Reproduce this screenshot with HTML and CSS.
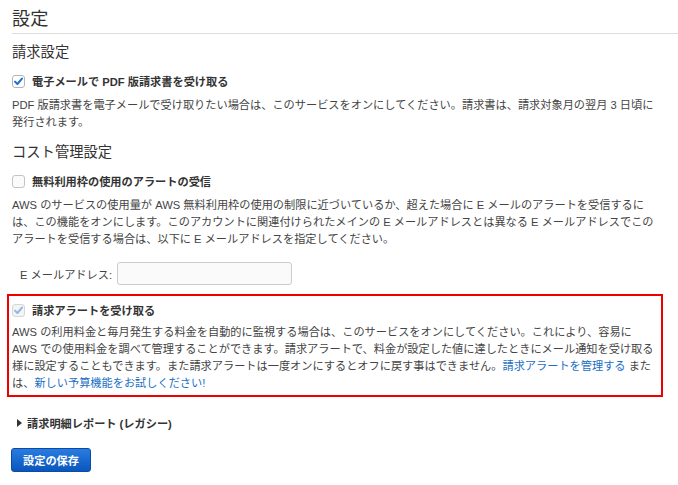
FILE: index.html
```html
<!DOCTYPE html>
<html lang="ja">
<head>
<meta charset="utf-8">
<link rel="stylesheet" href="styles.css">
</head>
<body>
<div class="page">
  <h1 class="title">設定</h1>

  <h2 class="section">請求設定</h2>
  <label class="check-row">
    <svg class="cb" width="13" height="13" viewBox="0 0 13 13"><rect x="0.5" y="0.5" width="12" height="12" rx="2.5" fill="#fff" stroke="#b5b5b5"/><path d="M3 6.6 L5.4 9 L10 3.6" fill="none" stroke="#1d6fd6" stroke-width="2" stroke-linecap="round" stroke-linejoin="round"/></svg>
    <span class="check-label">電子メールで PDF 版請求書を受け取る</span>
  </label>
  <p class="desc">PDF 版請求書を電子メールで受け取りたい場合は、このサービスをオンにしてください。請求書は、請求対象月の翌月 3 日頃に<br>発行されます。</p>

  <h2 class="section section-2">コスト管理設定</h2>
  <label class="check-row">
    <svg class="cb" width="13" height="13" viewBox="0 0 13 13"><rect x="0.5" y="0.5" width="12" height="12" rx="2.5" fill="#fafafa" stroke="#c4c4c4"/></svg>
    <span class="check-label">無料利用枠の使用のアラートの受信</span>
  </label>
  <p class="desc">AWS のサービスの使用量が AWS 無料利用枠の使用の制限に近づいているか、超えた場合に E メールのアラートを受信するに<br>は、この機能をオンにします。このアカウントに関連付けられたメインの E メールアドレスとは異なる E メールアドレスでこの<br>アラートを受信する場合は、以下に E メールアドレスを指定してください。</p>

  <div class="email-row">
    <span class="email-label">E メールアドレス:</span>
    <span class="email-input"></span>
  </div>

  <div class="alert-box">
    <label class="check-row">
      <svg class="cb" width="13" height="13" viewBox="0 0 13 13"><rect x="0.5" y="0.5" width="12" height="12" rx="2.5" fill="#f4f4f4" stroke="#d6d6d6"/><path d="M3 6.6 L5.4 9 L10 3.6" fill="none" stroke="#8fb8e6" stroke-width="2" stroke-linecap="round" stroke-linejoin="round"/></svg>
      <span class="check-label">請求アラートを受け取る</span>
    </label>
    <p class="desc desc-alert">AWS の利用料金と毎月発生する料金を自動的に監視する場合は、このサービスをオンにしてください。これにより、容易に<br>AWS での使用料金を調べて管理することができます。請求アラートで、料金が設定した値に達したときにメール通知を受け取る<br>様に設定することもできます。また請求アラートは一度オンにするとオフに戻す事はできません。<a class="link" href="#">請求アラートを管理する</a> また<br>は、<a class="link" href="#">新しい予算機能をお試しください!</a></p>
  </div>

  <div class="legacy">
    <span class="tri"></span>
    <span class="legacy-label">請求明細レポート (レガシー)</span>
  </div>

  <button class="save-btn" type="button">設定の保存</button>
</div>
</body>
</html>
```

FILE: styles.css
```css
html, body {
  margin: 0;
  padding: 0;
  background: #fff;
}

body {
  font-family: "Liberation Sans", "Noto Sans CJK JP", sans-serif;
  color: #444;
  font-size: 11.2px;
}

.page {
  padding-left: 12px;
  width: 666px;
}

.title {
  margin: 0;
  padding: 7px 0 2px;
  font-size: 18.2px;
  line-height: 24px;
  font-weight: normal;
  color: #333;
  border-bottom: 1px solid #ddd;
}

.section {
  margin: 8px 0 0;
  font-size: 14.3px;
  line-height: 20px;
  font-weight: normal;
  color: #333;
}

.section-2 {
  margin-top: 11px;
}

.check-row {
  display: flex;
  align-items: center;
  height: 18px;
  margin-top: 10px;
}

.cb {
  display: block;
  flex: none;
}

.check-label {
  margin-left: 7px;
  font-weight: bold;
  color: #333;
}

.desc {
  margin: 7px 0 0;
  line-height: 17px;
  white-space: nowrap;
}

.email-row {
  display: flex;
  align-items: center;
  margin-top: 14px;
  height: 23px;
}

.email-label {
  margin-left: 8px;
  color: #444;
}

.email-input {
  margin-left: 5px;
  width: 173px;
  height: 21px;
  border: 1px solid #ccc;
  border-radius: 3px;
  background: #fafafa;
}

.alert-box {
  margin: 9px 0 0 -5px;
  width: 649px;
  border: 2px solid #ee0000;
  padding: 0 0 3px 3px;
}

.alert-box .check-row {
  margin-top: 5px;
}

.desc-alert {
  margin-top: 5px;
}

.link {
  color: #1a6fc4;
  text-decoration: none;
}

.legacy {
  display: flex;
  align-items: center;
  height: 18px;
  margin-top: 17px;
  padding-left: 5px;
}

.tri {
  width: 0;
  height: 0;
  border-top: 4px solid transparent;
  border-bottom: 4px solid transparent;
  border-left: 5px solid #333;
}

.legacy-label {
  margin-left: 5px;
  font-weight: bold;
  color: #333;
}

.save-btn {
  display: block;
  margin: 16px 0 0 -1px;
  width: 80px;
  height: 24px;
  padding: 0;
  border: 1px solid #0a4aa8;
  border-radius: 3px;
  background: linear-gradient(#2a7ce0, #0a56bd);
  color: #fff;
  font-family: "Liberation Sans", "Noto Sans CJK JP", sans-serif;
  font-size: 11.2px;
  font-weight: bold;
}
```
